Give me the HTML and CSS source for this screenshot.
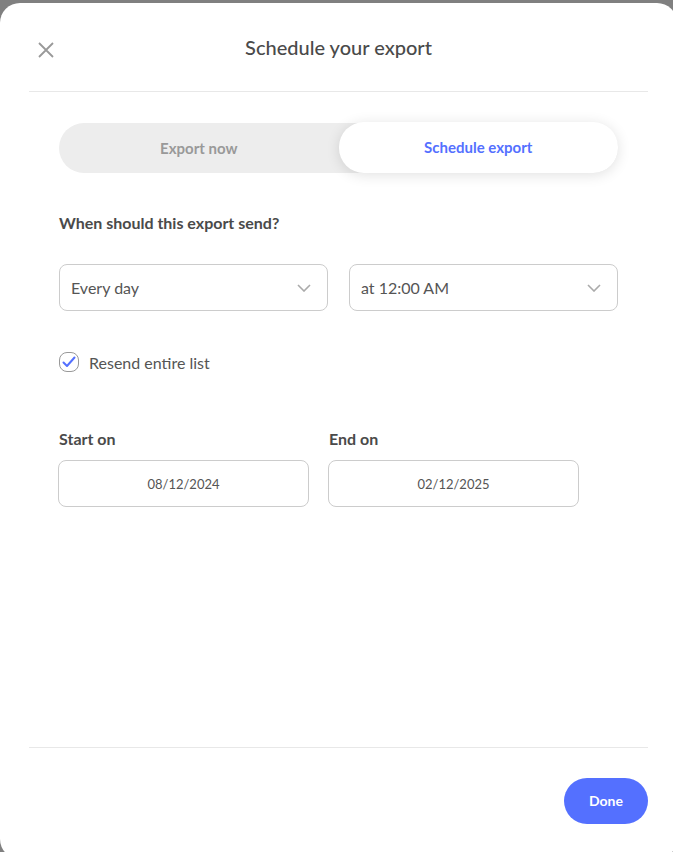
FILE: index.html
```html
<!DOCTYPE html>
<html lang="en">
<head>
  <meta charset="UTF-8">
  <title>Schedule your export</title>
  <link rel="stylesheet" href="styles.css">
</head>
<body>
  <div class="modal">
    <div class="header">
      <button class="close" type="button" aria-label="Close">
        <svg width="16" height="16" viewBox="0 0 16 16"><path d="M1 1L15 15M15 1L1 15" stroke="#999" stroke-width="1.8" fill="none"/></svg>
      </button>
      <h2>Schedule your export</h2>
    </div>

    <div class="content">
      <div class="toggle">
        <button type="button" class="tab">Export now</button>
        <button type="button" class="tab active">Schedule export</button>
      </div>

      <p class="label">When should this export send?</p>

      <div class="row selects">
        <div class="select">
          <span>Every day</span>
          <svg width="14" height="8" viewBox="0 0 14 8"><path d="M1 1L7 7L13 1" stroke="#aaa" stroke-width="1.6" fill="none"/></svg>
        </div>
        <div class="select">
          <span>at 12:00 AM</span>
          <svg width="14" height="8" viewBox="0 0 14 8"><path d="M1 1L7 7L13 1" stroke="#aaa" stroke-width="1.6" fill="none"/></svg>
        </div>
      </div>

      <label class="check">
        <span class="box">
          <svg width="14" height="12" viewBox="0 0 14 12"><path d="M1.5 6.5L5 10L12.5 1.5" stroke="#5470ff" stroke-width="2" fill="none" stroke-linecap="round" stroke-linejoin="round"/></svg>
        </span>
        Resend entire list
      </label>

      <div class="row dates">
        <div class="field">
          <p class="label">Start on</p>
          <div class="date">08/12/2024</div>
        </div>
        <div class="field">
          <p class="label">End on</p>
          <div class="date">02/12/2025</div>
        </div>
      </div>
    </div>

    <div class="footer">
      <button type="button" class="done">Done</button>
    </div>
  </div>
</body>
</html>
```

FILE: styles.css
```css
html, body {
  margin: 0;
  height: 100%;
  overflow: hidden;
}

body {
  background: #808080;
  font-family: Lato, "Open Sans", sans-serif;
  color: #4a4a4a;
}

.modal {
  background: #fff;
  width: 677px;
  height: 856px;
  margin-top: 3px;
  border-radius: 20px;
  display: flex;
  flex-direction: column;
  padding: 0 29px;
  box-sizing: border-box;
}

.header {
  height: 88px;
  display: flex;
  align-items: center;
  justify-content: center;
  position: relative;
  border-bottom: 1px solid #e8e8e8;
}

.header h2 {
  margin: 0;
  font-size: 20px;
  font-weight: 500;
  color: #4a4a4a;
}

.close {
  position: absolute;
  left: 9px;
  top: 39px;
  background: none;
  border: none;
  padding: 0;
  width: 16px;
  height: 16px;
  cursor: pointer;
}

.close svg {
  display: block;
}

.content {
  flex: 1;
  padding: 31px 30px 0;
}

.toggle {
  display: flex;
  background: #ededed;
  border-radius: 25px;
  height: 50px;
}

.tab {
  flex: 1;
  border: none;
  background: none;
  border-radius: 25px;
  font-family: inherit;
  font-size: 15px;
  font-weight: 700;
  color: #999;
  cursor: pointer;
  padding-bottom: 2px;
}

.tab.active {
  background: #fff;
  color: #5470ff;
  height: 51px;
  margin-top: -1px;
  box-shadow: 0 2px 14px rgba(0, 0, 0, 0.12);
}

.label {
  margin: 0;
  font-size: 16px;
  font-weight: 700;
  color: #4a4a4a;
}

.content > .label {
  margin-top: 40px;
}

.row {
  display: flex;
  gap: 21px;
}

.selects {
  margin-top: 32px;
}

.select {
  flex: 1;
  height: 47px;
  border: 1px solid #ccc;
  border-radius: 8px;
  box-sizing: border-box;
  display: flex;
  align-items: center;
  justify-content: space-between;
  padding: 0 16px 0 11px;
  font-size: 16px;
  color: #555;
}

.check {
  display: flex;
  align-items: center;
  gap: 10px;
  margin-top: 41px;
  font-size: 16px;
  color: #555;
}

.box {
  width: 20px;
  height: 20px;
  border: 1px solid #999;
  border-radius: 8px;
  box-sizing: border-box;
  display: flex;
  align-items: center;
  justify-content: center;
}

.dates {
  margin-top: 57px;
  gap: 19px;
  margin-left: -1px;
}

.field {
  width: 251px;
}

.field .label {
  margin-left: 1px;
  margin-bottom: 12px;
}

.date {
  height: 47px;
  border: 1px solid #ccc;
  border-radius: 8px;
  box-sizing: border-box;
  display: flex;
  align-items: center;
  justify-content: center;
  font-size: 13px;
  color: #555;
}

.footer {
  border-top: 1px solid #e8e8e8;
  display: flex;
  justify-content: flex-end;
  padding: 30px 0 35px;
}

.done {
  width: 84px;
  height: 46px;
  border: none;
  border-radius: 23px;
  background: #5470ff;
  color: #fff;
  font-family: inherit;
  font-size: 14px;
  font-weight: 700;
  cursor: pointer;
  padding-bottom: 2px;
}
```
